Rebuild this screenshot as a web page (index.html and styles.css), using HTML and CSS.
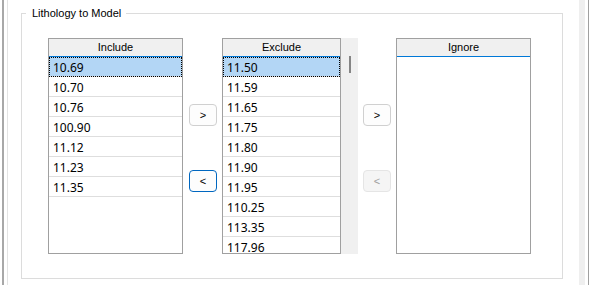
FILE: index.html
```html
<!DOCTYPE html>
<html>
<head>
<meta charset="utf-8">
<link rel="stylesheet" href="styles.css">
</head>
<body>
<div class="window">
  <div class="edge-dark"></div>
  <div class="edge-light"></div>
  <div class="group">
    <span class="legend">Lithology to Model</span>
    <div class="cols">
      <div class="list include">
        <div class="head">Include</div>
        <div class="row selected">10.69</div>
        <div class="row">10.70</div>
        <div class="row">10.76</div>
        <div class="row">100.90</div>
        <div class="row">11.12</div>
        <div class="row">11.23</div>
        <div class="row">11.35</div>
      </div>
      <div class="btncol first">
        <button class="btn">&gt;</button>
        <button class="btn focused">&lt;</button>
      </div>
      <div class="list exclude">
        <div class="head">Exclude</div>
        <div class="row selected">11.50</div>
        <div class="row">11.59</div>
        <div class="row">11.65</div>
        <div class="row">11.75</div>
        <div class="row">11.80</div>
        <div class="row">11.90</div>
        <div class="row">11.95</div>
        <div class="row">110.25</div>
        <div class="row">113.35</div>
        <div class="row">117.96</div>
      </div>
      <div class="scroll"><div class="thumb"></div></div>
      <div class="btncol">
        <button class="btn">&gt;</button>
        <button class="btn disabled">&lt;</button>
      </div>
      <div class="list ignore">
        <div class="head">Ignore</div>
      </div>
    </div>
  </div>
  <div class="rgap"></div>
  <div class="band"></div>
  <div class="rgap2"></div>
  <div class="edge-right"></div>
</div>
</body>
</html>
```

FILE: styles.css
```css
* { box-sizing: border-box; }
html, body { margin: 0; padding: 0; background: #ffffff; }
body { font-family: "Noto Sans", sans-serif; color: #000; }

.window {
  display: flex;
  width: 589px;
  height: 285px;
  overflow: hidden;
}
.edge-dark {
  width: 2px;
  margin-left: 2px;
  background: #a8a8a8;
}
.edge-light {
  width: 1px;
  margin-left: 3px;
  background: #e3e3e3;
}
.group {
  position: relative;
  flex: none;
  width: 542px;
  height: 266px;
  margin-top: 13px;
  margin-left: 13px;
  border: 1px solid #dcdcdc;
  padding: 24px 0 0 26px;
}
.legend {
  position: absolute;
  top: -8px;
  left: 4px;
  padding: 0 5px 0 6px;
  background: #ffffff;
  font-family: "Liberation Sans", sans-serif;
  font-size: 11px;
  line-height: 14px;
}
.cols {
  display: flex;
  align-items: flex-start;
}
.list {
  height: 216px;
  border: 1px solid #a0a0a0;
  background: #ffffff;
  overflow: hidden;
  flex: none;
}
.include, .ignore { width: 135px; }
.exclude { width: 119px; }
.head {
  height: 18px;
  background: #f0f0f0;
  border-bottom: 1px solid #0078d7;
  text-align: center;
  font-family: "Liberation Sans", sans-serif;
  font-size: 11px;
  line-height: 17px;
}
.row {
  height: 20px;
  border-bottom: 1px solid #dedede;
  padding: 3px 0 0 4px;
  font-size: 12px;
  line-height: 16px;
}
.row.selected {
  background: #b3d6f5;
  outline: 1px dotted #000;
  outline-offset: -1px;
}
.scroll {
  flex: none;
  width: 17px;
  height: 216px;
  background: #f0f0f0;
  padding: 18px 0 0 8px;
}
.thumb {
  width: 2px;
  height: 17px;
  background: #858585;
}
.btncol {
  flex: none;
  width: 28px;
  margin: 0 5px;
  padding-top: 66px;
  display: flex;
  flex-direction: column;
  gap: 44px;
}
.btncol.first { margin-left: 6px; }
.btn {
  width: 28px;
  height: 22px;
  padding: 0;
  border: 1px solid #d0d0d0;
  border-radius: 4px;
  background: #fdfdfd;
  font-family: "Liberation Sans", sans-serif;
  font-size: 11px;
  line-height: 20px;
  color: #000;
}
.btn.focused { border-color: #0067c0; }
.btn.disabled {
  background: #f5f5f5;
  border-color: #e5e5e5;
  color: #a0a0a0;
}
.rgap { width: 16px; flex: none; }
.band { width: 6px; flex: none; background: #efefef; }
.rgap2 { width: 3px; flex: none; }
.edge-right { width: 1px; flex: none; background: #a0a0a0; }
```
